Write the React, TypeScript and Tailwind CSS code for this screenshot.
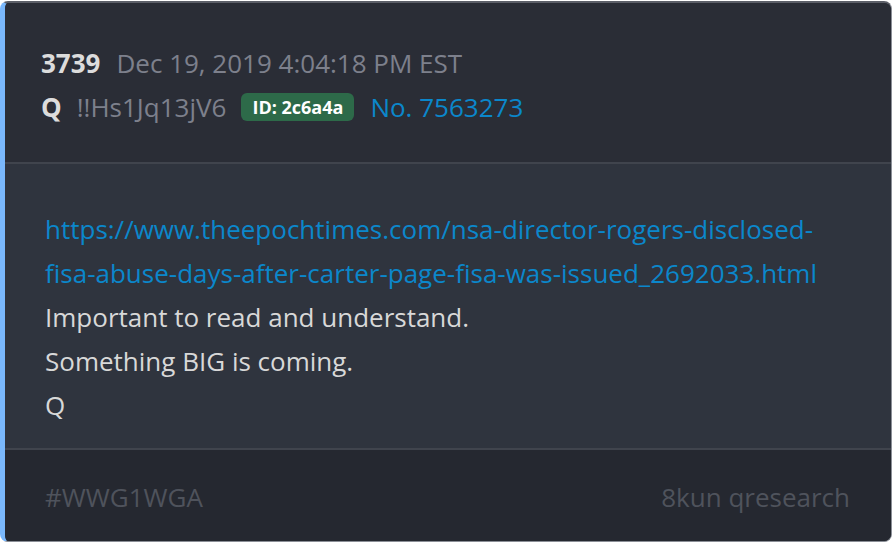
import React from "react";

type postType = {
  num: number;
  date: string;
  name: string;
  trip: string;
  id: string;
  no: string;
  link: string[];
  lines: string[];
};

const post: postType = {
  num: 3739,
  date: "Dec 19, 2019 4:04:18 PM EST",
  name: "Q",
  trip: "!!Hs1Jq13jV6",
  id: "2c6a4a",
  no: "7563273",
  link: [
    "https://www.theepochtimes.com/nsa-director-rogers-disclosed-",
    "fisa-abuse-days-after-carter-page-fisa-was-issued_2692033.html",
  ],
  lines: ["Important to read and understand.", "Something BIG is coming.", "Q"],
};

function App() {
  return (
    <div
      className="w-[894px] h-[544px] bg-white pt-px pr-[2px] pb-[2px]"
      style={{ fontFamily: '"Open Sans", "Noto Sans", sans-serif' }}
    >
      <div className="h-full flex flex-col rounded-[8px] overflow-hidden border-t-2 border-t-[#5c5f68] border-r border-r-[#8b8f97] border-b border-b-[#8b8f97] border-l-[5px] border-l-[#7ab8fc] bg-[#2a2d36]">
        {/* header */}
        <div className="bg-[#2a2d36] pl-[36px] pt-[38px] pb-[33px] text-[26px] leading-[44px]">
          <div className="flex items-center gap-[16px]">
            <span className="font-bold text-[#dcdcdc]">{post.num}</span>
            <span className="text-[#7d808c]">{post.date}</span>
          </div>
          <div className="flex items-center">
            <span className="font-bold text-[#dcdcdc]">{post.name}</span>
            <span className="ml-[15px] text-[#7d808c]">{post.trip}</span>
            <span className="ml-[15px] h-[28px] px-[11px] rounded-[6px] bg-[#2d6a49] text-white font-bold text-[18px] leading-[28px]">
              ID: {post.id}
            </span>
            <span className="ml-[16px] text-[#0b87cb]">No. {post.no}</span>
          </div>
        </div>
        <div className="h-[2px] bg-[#40444d]" />
        {/* body */}
        <div className="bg-[#2f343e] pl-[40px] pt-[43px] pb-[21px] text-[26px] leading-[44px]">
          {post.link.map((l) => (
            <div key={l} className="text-[#0b87cb]">
              {l}
            </div>
          ))}
          {post.lines.map((l) => (
            <div key={l} className="text-[#d8d8d8]">
              {l}
            </div>
          ))}
        </div>
        <div className="h-[2px] bg-[#40444d]" />
        {/* footer */}
        <div className="flex-1 bg-[#252830] flex items-center justify-between pl-[40px] pr-[41px] pt-[3px] text-[26px] text-[#4f535c]">
          <span>#WWG1WGA</span>
          <span>8kun qresearch</span>
        </div>
      </div>
    </div>
  );
}

export default App;
